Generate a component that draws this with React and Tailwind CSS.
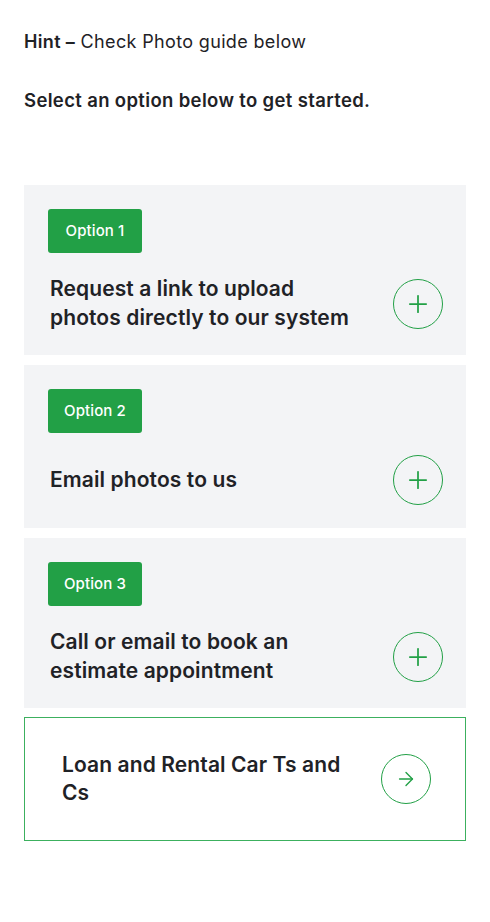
import { Plus, ArrowRight } from 'lucide-react';

const options = [
  { label: 'Option 1', title: 'Request a link to upload photos directly to our system' },
  { label: 'Option 2', title: 'Email photos to us' },
  { label: 'Option 3', title: 'Call or email to book an estimate appointment' },
];

function OptionCard({ label, title }) {
  return (
    <div className="bg-[#f3f4f6] pl-6 pr-[23px] pt-6 pb-[23px]">
      <span className="inline-flex h-[44px] w-[94px] items-center justify-center rounded-[3px] bg-[#22a046] text-[15px] font-medium tracking-[0.1px] text-white">
        {label}
      </span>
      <div className="mt-[22px] flex items-center justify-between">
        <p className="max-w-[310px] pl-[2px] text-[21px] font-semibold leading-[28.5px] tracking-[0.1px] text-[#1f2226]">
          {title}
        </p>
        <button className="flex h-[50px] w-[50px] shrink-0 items-center justify-center rounded-full border-[1.5px] border-[#22a046] text-[#22a046]">
          <Plus size={28} strokeWidth={1.5} />
        </button>
      </div>
    </div>
  );
}

export default function App() {
  return (
    <div className="min-h-[922px] w-[490px] bg-white px-6 pt-[30px] font-['Inter',sans-serif] text-[#1f2226]">
      <p className="text-[18px] leading-[24px] tracking-[0.35px]">
        <span className="font-semibold">Hint –</span> Check Photo guide below
      </p>
      <p className="mt-[34px] text-[18.5px] font-semibold leading-[24px] tracking-[0.35px]">
        Select an option below to get started.
      </p>
      <div className="mt-[73px] flex flex-col gap-[10px]">
        {options.map((o) => (
          <OptionCard key={o.label} {...o} />
        ))}
        <div className="-mt-px flex items-center justify-between border border-[#3cb05e] py-[33px] pl-[37px] pr-[34px]">
          <p className="max-w-[290px] text-[21px] font-semibold leading-[28px] tracking-[0.1px]">
            Loan and Rental Car Ts and Cs
          </p>
          <button className="flex h-[50px] w-[50px] shrink-0 items-center justify-center rounded-full border-[1.5px] border-[#22a046] text-[#22a046]">
            <ArrowRight size={22} strokeWidth={1.5} />
          </button>
        </div>
      </div>
    </div>
  );
}
